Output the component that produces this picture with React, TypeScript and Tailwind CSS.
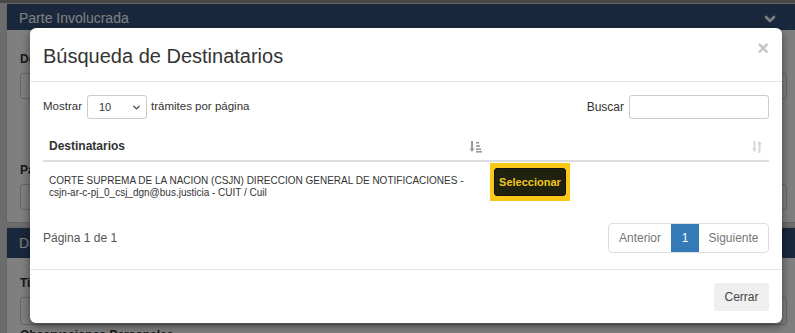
import { ChevronDown } from "lucide-react";

const SortAsc = () => (
  <svg width="13" height="13" viewBox="0 0 13 13" className="text-[#9a9a9a]">
    <path d="M3 1v9" stroke="currentColor" strokeWidth="2" />
    <path d="M0.5 8.5L3 12l2.5-3.5z" fill="currentColor" />
    <rect x="7" y="2" width="3" height="1.6" fill="currentColor" />
    <rect x="7" y="5.2" width="4" height="1.6" fill="currentColor" />
    <rect x="7" y="8.4" width="5" height="1.6" fill="currentColor" />
    <rect x="7" y="11" width="6" height="1.6" fill="currentColor" />
  </svg>
);

const SortBoth = () => (
  <svg width="12" height="13" viewBox="0 0 12 13" className="text-[#d6d6d6]">
    <path d="M3.5 1v9" stroke="currentColor" strokeWidth="2" />
    <path d="M1 8.5L3.5 12 6 8.5z" fill="currentColor" />
    <path d="M8.5 3v10" stroke="currentColor" strokeWidth="2" />
    <path d="M6 4.5L8.5 1 11 4.5z" fill="currentColor" />
  </svg>
);

const App = () => {
  return (
    <div className="relative h-[333px] w-full overflow-hidden bg-[#d8d8d8] font-['Liberation_Sans',Arial,sans-serif]">
      {/* page behind the modal */}
      <div className="h-[3px] bg-[#909090]" />
      <div className="ml-[6px] mr-[-6px] rounded-t-[4px] border border-[#c8c8c8] bg-white">
        <div className="flex h-[26px] items-center justify-between bg-[#34507a] px-[12px] pt-[3px] text-[14px] text-white">
          <span>Parte Involucrada</span>
          <ChevronDown className="mr-[10px] h-[16px] w-[16px]" strokeWidth={4} />
        </div>
        <div className="px-[13px] pb-[12px] pt-[20px]">
          <div className="text-[12px] font-bold text-[#333]">Domicilio Electrónico</div>
          <div className="mt-[5px] h-[26px] rounded-[3px] border border-[#ccc]" />
          <div className="mt-[62px] text-[12px] font-bold text-[#333]">Partido</div>
          <div className="mt-[5px] h-[26px] rounded-[3px] border border-[#ccc]" />
        </div>
      </div>
      <div className="ml-[6px] mr-[-6px] mt-[4px] rounded-t-[4px] border border-[#c8c8c8] bg-white">
        <div className="flex h-[30px] items-center justify-between bg-[#34507a] px-[12px] text-[14px] text-white">
          <span>Datos del Trámite</span>
          <ChevronDown className="mr-[10px] h-[16px] w-[16px]" strokeWidth={4} />
        </div>
        <div className="px-[13px] pt-[16px]">
          <div className="text-[12px] font-bold text-[#333]">Tipo</div>
          <div className="mt-[5px] flex h-[28px] items-center justify-end rounded-[3px] border border-[#ccc] pr-[8px]">
            <ChevronDown className="h-[12px] w-[12px] text-[#333]" strokeWidth={3} />
          </div>
          <div className="mt-[1px] text-[12px] font-bold text-[#333]">Observaciones Personales</div>
        </div>
      </div>

      <div className="absolute inset-0 bg-black/50" />

      {/* modal */}
      <div className="absolute left-[30px] top-[28px] flex h-[295px] w-[752px] flex-col rounded-[6px] bg-white shadow-[0_3px_9px_rgba(0,0,0,0.5)]">
        <div className="flex h-[54px] items-start justify-between border-b border-[#e5e5e5] px-[13px]">
          <h4 className="pt-[13px] text-[20px] text-[#333]">Búsqueda de Destinatarios</h4>
          <button className="pt-[10px] text-[20px] font-bold leading-none text-[#c4c4c4]">×</button>
        </div>

        <div className="flex-1 px-[13px] pt-[13px] text-[12px] text-[#333]">
          <div className="flex h-[24px] items-center justify-between">
            <div className="flex items-center text-[11.5px]">
              <span>Mostrar</span>
              <div className="ml-[5px] flex h-[24px] w-[60px] items-center justify-between rounded-[3px] border border-[#ccc] pl-[11px] pr-[4px] text-[11px]">
                <span>10</span>
                <ChevronDown className="h-[11px] w-[11px] text-[#444]" strokeWidth={3} />
              </div>
              <span className="ml-[4px]">trámites por página</span>
            </div>
            <div className="flex items-center">
              <span>Buscar</span>
              <div className="ml-[5px] h-[24px] w-[140px] rounded-[3px] border border-[#ccc]" />
            </div>
          </div>

          <div className="mt-[11px] flex h-[32px] items-center border-b-2 border-[#ddd] pt-[2px]">
            <div className="flex w-[447px] items-center justify-between pl-[6px] pr-[8px]">
              <span className="font-bold text-[#333]">Destinatarios</span>
              <SortAsc />
            </div>
            <div className="flex flex-1 justify-end pr-[6px]">
              <SortBoth />
            </div>
          </div>

          <div className="flex h-[40px] items-center">
            <div className="w-[447px] pl-[6px] pt-[9px] text-[10px] leading-[12px] text-[#333]">
              CORTE SUPREMA DE LA NACION (CSJN) DIRECCION GENERAL DE NOTIFICACIONES -
              <br />
              csjn-ar-c-pj_0_csj_dgn@bus.justicia - CUIT / Cuil
            </div>
            <div className="bg-[#fcc817] px-[4px] py-[5px]">
              <button className="h-[28px] w-[72px] rounded-[3px] border border-[#111] bg-[#20220f] text-[11px] font-bold text-[#efc81e]">
                Seleccionar
              </button>
            </div>
          </div>

          <div className="mt-[21px] flex items-center justify-between">
            <span className="text-[#555]">Página 1 de 1</span>
            <div className="flex h-[30px] overflow-hidden rounded-[4px] border border-[#ddd] text-[12px]">
              <span className="flex w-[62px] items-center justify-center text-[#777]">Anterior</span>
              <span className="flex w-[28px] items-center justify-center bg-[#337ab7] text-white">1</span>
              <span className="flex w-[69px] items-center justify-center text-[#777]">Siguiente</span>
            </div>
          </div>
        </div>

        <div className="flex h-[54px] items-center justify-end border-t border-[#e5e5e5] px-[13px]">
          <button className="h-[28px] w-[55px] rounded-[3px] bg-[#efefef] text-[12px] text-[#444]">Cerrar</button>
        </div>
      </div>
    </div>
  );
};

export default App;
